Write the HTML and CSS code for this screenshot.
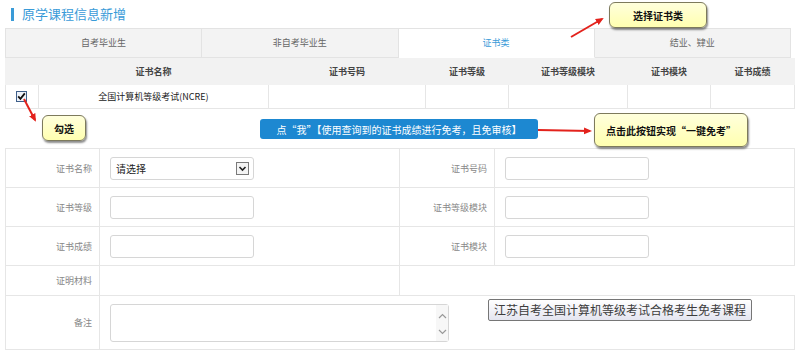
FILE: index.html
```html
<!DOCTYPE html>
<html>
<head>
    <meta charset="utf-8">
    <title>原学课程信息新增</title>
    <link rel="stylesheet" href="styles.css">
</head>
<body>
    <div class="page">
        <h2 class="title">原学课程信息新增</h2>

        <div class="tabs">
            <div class="tab">自考毕业生</div>
            <div class="tab">非自考毕业生</div>
            <div class="tab active">证书类</div>
            <div class="tab">结业、肄业</div>
        </div>

        <table class="cert">
            <colgroup>
                <col style="width:33px"><col style="width:230px"><col style="width:157px">
                <col style="width:83px"><col style="width:119px"><col style="width:83px"><col style="width:84px">
            </colgroup>
            <tr>
                <th></th>
                <th>证书名称</th>
                <th>证书号码</th>
                <th>证书等级</th>
                <th>证书等级模块</th>
                <th>证书模块</th>
                <th>证书成绩</th>
            </tr>
            <tr>
                <td class="chk">
                    <svg width="11" height="11" viewBox="0 0 11 11">
                        <rect x="0.5" y="0.5" width="10" height="10" fill="#eef3fa" stroke="#3f5f8a"/>
                        <path d="M2.2 5.4 L4.4 7.8 L8.8 2.4" fill="none" stroke="#111" stroke-width="1.8"/>
                    </svg>
                </td>
                <td>全国计算机等级考试(NCRE)</td>
                <td></td><td></td><td></td><td></td><td></td>
            </tr>
        </table>

        <div class="actions">
            <button class="btn-free">点“我”【使用查询到的证书成绩进行免考，且免审核】</button>
        </div>

        <table class="form">
            <colgroup>
                <col style="width:94px"><col style="width:300px"><col style="width:95px"><col style="width:300px">
            </colgroup>
            <tr class="row">
                <th>证书名称</th>
                <td>
                    <div class="select">
                        <span>请选择</span>
                        <span class="caret">
                            <svg width="11" height="11" viewBox="0 0 11 11">
                                <path d="M2.5 4 L5.5 7 L8.5 4" fill="none" stroke="#222" stroke-width="1.6"/>
                            </svg>
                        </span>
                    </div>
                </td>
                <th>证书号码</th>
                <td><input class="field" type="text"></td>
            </tr>
            <tr class="row">
                <th>证书等级</th>
                <td><input class="field" type="text"></td>
                <th>证书等级模块</th>
                <td><input class="field" type="text"></td>
            </tr>
            <tr class="row">
                <th>证书成绩</th>
                <td><input class="field" type="text"></td>
                <th>证书模块</th>
                <td><input class="field" type="text"></td>
            </tr>
            <tr class="row-file">
                <th>证明材料</th>
                <td></td>
                <td class="blank" colspan="2"></td>
            </tr>
            <tr class="row-memo">
                <th>备注</th>
                <td colspan="3">
                    <div class="memo">
                        <div class="memo-bar">
                            <svg width="9" height="6" viewBox="0 0 9 6"><path d="M1 5 L4.5 1.5 L8 5" fill="none" stroke="#999" stroke-width="1.2"/></svg>
                            <svg width="9" height="6" viewBox="0 0 9 6"><path d="M1 1 L4.5 4.5 L8 1" fill="none" stroke="#999" stroke-width="1.2"/></svg>
                        </div>
                    </div>
                </td>
            </tr>
        </table>
    </div>

    <!-- annotations drawn over the screenshot -->
    <svg class="arrows" width="799" height="357" viewBox="0 0 799 357">
        <defs>
            <marker id="head" markerWidth="8" markerHeight="8" refX="6" refY="4" orient="auto" markerUnits="userSpaceOnUse">
                <path d="M0 0.5 L8 4 L0 7.5 Z" fill="#e3221c"/>
            </marker>
        </defs>
        <line x1="571" y1="37" x2="602" y2="19" stroke="#e3221c" stroke-width="2" marker-end="url(#head)"/>
        <line x1="24" y1="99" x2="35" y2="120" stroke="#e3221c" stroke-width="2" marker-end="url(#head)"/>
        <line x1="538" y1="130" x2="590" y2="131" stroke="#e3221c" stroke-width="2" marker-end="url(#head)"/>
    </svg>
    <div class="note note-tab">选择证书类</div>
    <div class="note note-check">勾选</div>
    <div class="note note-btn">点击此按钮实现“一键免考”</div>
    <div class="tip">江苏自考全国计算机等级考试合格考生免考课程</div>
</body>
</html>
```

FILE: styles.css
```css
body {
    margin: 0;
    font-family: "Noto Sans CJK SC", "Noto Sans", sans-serif;
    font-size: 9px;
    color: #333;
    background: #fff;
}
.page {
    padding: 0 5px;
}
.title {
    margin: 0;
    height: 28px;
    line-height: 28px;
    padding-left: 17px;
    font-size: 13px;
    font-weight: normal;
    color: #3a9bd8;
    position: relative;
}
.title::before {
    content: "";
    position: absolute;
    left: 6px;
    top: 8px;
    width: 3px;
    height: 13px;
    background: #3a9bd8;
}
.tabs {
    display: flex;
    width: 785px;
    border-top: 1px solid #e3e3e3;
    border-left: 1px solid #e3e3e3;
}
.tab {
    flex: 1;
    height: 28px;
    line-height: 28px;
    text-align: center;
    color: #666;
    background: #f3f3f3;
    border-right: 1px solid #e3e3e3;
    border-bottom: 1px solid #e3e3e3;
}
.tab.active {
    background: #fff;
    color: #3a9bd8;
    border-bottom-color: #fff;
}
.cert {
    width: 789px;
    table-layout: fixed;
    border-collapse: collapse;
}
.cert th {
    height: 25px;
    background: #f2f2f2;
    font-weight: bold;
    color: #444;
    padding: 0;
    border: 1px solid #f2f2f2;
}
.cert td {
    height: 23px;
    text-align: center;
    padding: 0;
    border: 1px solid #e6e6e6;
    color: #222;
}
.cert td.chk svg {
    display: block;
    margin: 0 0 0 10px;
}
.actions {
    height: 39px;
    padding-left: 255px;
    box-sizing: border-box;
    padding-top: 10px;
}
.btn-free {
    height: 20px;
    width: 278px;
    border: none;
    border-radius: 3px;
    background: #1d88d1;
    color: #fff;
    font-family: inherit;
    font-size: 10px;
    padding: 0;
}
.form {
    width: 789px;
    table-layout: fixed;
    border-collapse: collapse;
}
.form th,
.form td {
    border: 1px solid #e6e6e6;
    padding: 0;
}
.form th {
    font-weight: normal;
    color: #888;
    text-align: right;
    padding-right: 7px;
}
.form td {
    padding-left: 10px;
}
.form .row th,
.form .row td {
    height: 38px;
}
.form .row-file th,
.form .row-file td {
    height: 29px;
}
.form .row-memo th,
.form .row-memo td {
    height: 53px;
}
.form td.blank {
    border-right: none;
}
.field,
.select {
    display: block;
    box-sizing: border-box;
    width: 144px;
    height: 23px;
    border: 1px solid #d6d6d6;
    border-radius: 3px;
    margin: 0;
}
.select {
    display: flex;
    align-items: center;
    justify-content: space-between;
    padding: 0 4px 0 5px;
    font-size: 10px;
    color: #222;
}
.caret {
    display: flex;
    width: 11px;
    height: 11px;
    border: 1px solid #7a7a7a;
    background: #f4f4f4;
}
.memo {
    box-sizing: border-box;
    width: 339px;
    height: 38px;
    border: 1px solid #d6d6d6;
    border-radius: 3px;
    display: flex;
    justify-content: flex-end;
}
.memo-bar {
    width: 12px;
    background: #f7f7f7;
    display: flex;
    flex-direction: column;
    justify-content: space-between;
    align-items: center;
    padding: 8px 0 6px;
}
.memo-bar svg {
    display: block;
}
.arrows {
    position: absolute;
    left: 0;
    top: 0;
    pointer-events: none;
}
.note {
    position: absolute;
    box-sizing: border-box;
    border: 1px solid #7d7a5c;
    border-radius: 6px;
    background: linear-gradient(#ffffdc, #ffffb0);
    box-shadow: 1px 2px 2px rgba(0, 0, 0, 0.45);
    font-size: 10px;
    font-weight: bold;
    color: #111;
    display: flex;
    align-items: center;
    justify-content: center;
}
.note-tab {
    left: 609px;
    top: 2px;
    width: 98px;
    height: 26px;
}
.note-check {
    left: 42px;
    top: 115px;
    width: 44px;
    height: 26px;
}
.note-btn {
    left: 594px;
    top: 113px;
    width: 154px;
    height: 34px;
}
.tip {
    position: absolute;
    left: 488px;
    top: 299px;
    height: 22px;
    box-sizing: border-box;
    padding: 0 5px;
    border: 1px solid #767676;
    border-radius: 2px;
    background: linear-gradient(#ffffff, #e4e5f0);
    font-size: 12px;
    line-height: 20px;
    color: #3c3c3c;
}
```
